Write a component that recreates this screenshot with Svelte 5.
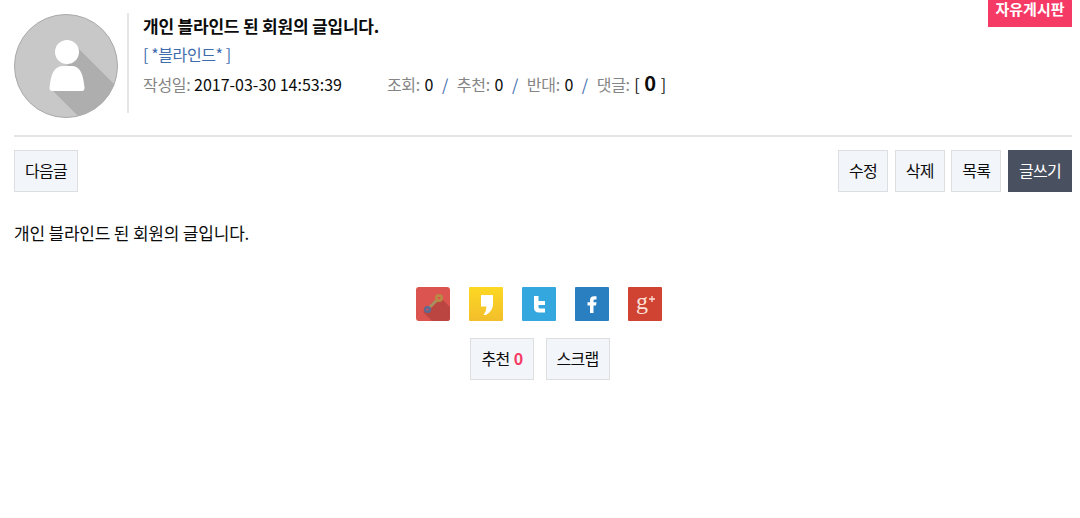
<script lang="ts">
  const shares = ['key', 'kakao', 'twitter', 'facebook', 'google'];
</script>

<div class="page">
  <span class="board">자유게시판</span>

  <header class="head">
    <svg class="avatar" viewBox="0 0 104 104" aria-hidden="true">
      <defs>
        <clipPath id="round"><circle cx="52" cy="52" r="51.5" /></clipPath>
      </defs>
      <circle cx="52" cy="52" r="51.5" fill="#c8c8c8" stroke="#a9a9a9" />
      <path clip-path="url(#round)" d="M64 34 L110 80 L110 110 L72 110 L38 76 Z" fill="#aeaeae" />
      <circle cx="53" cy="38" r="12" fill="#fff" />
      <path d="M36 76 Q35 74 36 70 Q38 52 49 52 L58 52 Q68 52 70 70 Q71 74 70 76 Q70 77 67 77 L39 77 Q36 77 36 76 Z" fill="#fff" />
    </svg>
    <div class="info">
      <h1>개인 블라인드 된 회원의 글입니다.</h1>
      <div class="author">[ *블라인드* ]</div>
      <div class="meta">
        <span class="date"><em>작성일:</em> 2017-03-30 14:53:39</span>
        <span><em>조회:</em> 0 <i>/</i> <em>추천:</em> 0 <i>/</i> <em>반대:</em> 0 <i>/</i> <em>댓글:</em> [ <b>0</b> ]</span>
      </div>
    </div>
  </header>

  <nav class="toolbar">
    <a class="btn">다음글</a>
    <div class="right">
      <a class="btn">수정</a>
      <a class="btn">삭제</a>
      <a class="btn">목록</a>
      <a class="btn dark">글쓰기</a>
    </div>
  </nav>

  <p class="body">개인 블라인드 된 회원의 글입니다.</p>

  <div class="shares">
    {#each shares as s}
      <svg class="share" viewBox="0 0 34 34" aria-hidden="true">
        {#if s === 'key'}
          <rect width="34" height="34" rx="3" fill="#dc5450" />
          <path d="M7 25 L23 9 L34 20 L34 31 Q34 34 31 34 L16 34 Z" fill="#bb4540" />
          <path d="M13 21 L21 13" stroke="#a89060" stroke-width="3" />
          <circle cx="23" cy="11" r="4" fill="#b98a45" />
          <circle cx="23" cy="11" r="1.3" fill="#dc5450" />
          <circle cx="11.5" cy="22.5" r="3.6" fill="#5d6a94" />
          <circle cx="11.5" cy="22.5" r="1.1" fill="#dc5450" />
        {:else if s === 'kakao'}
          <defs>
            <linearGradient id="yel" x1="0" y1="0" x2="0" y2="1">
              <stop offset="0" stop-color="#fcd823" />
              <stop offset="1" stop-color="#f2be2b" />
            </linearGradient>
          </defs>
          <rect width="34" height="34" rx="1" fill="url(#yel)" />
          <path d="M12 8 H24 V17 Q24 24 17 28 L14.5 28 Q17.5 24 17.5 19.5 L12 19.5 Z" fill="#fff" />
        {:else if s === 'twitter'}
          <rect width="34" height="34" rx="1" fill="#34a8de" />
          <path d="M12 9 H16.5 V14 H23 V18 H16.5 V20 Q16.5 21.5 18 21.5 H23 V25.5 H17 Q12 25.5 12 20.5 Z" fill="#fff" />
        {:else if s === 'facebook'}
          <rect width="34" height="34" rx="1" fill="#2a7fc1" />
          <path d="M15 26 V18.5 H12.5 V15.3 H15 V13 Q15 9.2 19 9.2 H21.5 V12.4 H20 Q18.5 12.4 18.5 13.7 V15.3 H21.5 L21 18.5 H18.5 V26 Z" fill="#fff" />
        {:else}
          <rect width="34" height="34" rx="1" fill="#d04332" />
          <text x="8" y="22" class="gplus">g</text>
          <path d="M21 12 H27 M24 9 V15" stroke="#fbe0d8" stroke-width="1.3" />
        {/if}
      </svg>
    {/each}
  </div>

  <div class="actions">
    <a class="btn">추천&nbsp;<strong>0</strong></a>
    <a class="btn">스크랩</a>
  </div>
</div>

<style>
  :global(body) {
    margin: 0;
    background: #fff;
  }
  .page {
    position: relative;
    height: 518px;
    box-sizing: border-box;
    padding: 13px 8px 0 14px;
    font-family: "Noto Sans CJK KR", "Noto Sans", sans-serif;
    font-size: 16px;
    color: #0c0c0c;
    overflow: hidden;
  }
  .board {
    position: absolute;
    top: 0;
    right: 8px;
    width: 84px;
    height: 27px;
    background: #f53a66;
    color: #fff;
    font-size: 15px;
    font-weight: 700;
    line-height: 16px;
    padding-top: 1px;
    box-sizing: border-box;
    text-align: center;
  }
  .head {
    display: flex;
    gap: 9px;
    padding-bottom: 17px;
    border-bottom: 2px solid #e4e4e4;
  }
  .avatar {
    width: 104px;
    height: 104px;
    margin-top: 1px;
    flex: none;
  }
  .info {
    height: 100px;
    box-sizing: border-box;
    border-left: 2px solid #e6e6e6;
    padding-left: 14px;
  }
  h1 {
    margin: 0;
    height: 26px;
    font-size: 17px;
    line-height: 26px;
    font-weight: 700;
    letter-spacing: -0.2px;
  }
  .author {
    margin-top: 2px;
    height: 28px;
    line-height: 26px;
    color: #3f6cad;
    letter-spacing: -0.4px;
  }
  .meta {
    display: flex;
    gap: 45px;
    line-height: 30px;
  }
  .meta em {
    font-style: normal;
    color: #858585;
    letter-spacing: -0.3px;
  }
  .meta i {
    font-style: normal;
    color: #3f6cad;
    margin: 0 5px;
  }
  .meta span:last-child em {
    margin-right: 1px;
  }
  .meta b {
    font-size: 20px;
    font-weight: 700;
    line-height: 20px;
    margin: 0 1px;
  }
  .toolbar {
    display: flex;
    justify-content: space-between;
    margin-top: 13px;
  }
  .right {
    display: flex;
    gap: 6.6px;
  }
  .btn {
    display: flex;
    align-items: center;
    justify-content: center;
    box-sizing: border-box;
    height: 42px;
    padding: 0 10px 2px;
    background: #f2f5f9;
    border: 1px solid #dcdee0;
    font-size: 16px;
    letter-spacing: -0.7px;
    color: #0c0c0c;
  }
  .btn.dark {
    background: #495060;
    border-color: #495060;
    color: #fff;
  }
  .btn strong {
    margin-left: 1.5px;
    color: #f53a66;
    font-weight: 700;
  }
  .body {
    margin: 29px 0 0;
    font-size: 17px;
    line-height: 24px;
    letter-spacing: -0.2px;
  }
  .shares {
    display: flex;
    justify-content: center;
    gap: 19px;
    margin-top: 42px;
    padding-right: 8px;
  }
  .share {
    width: 34px;
    height: 34px;
  }
  .gplus {
    font-family: "Liberation Serif", serif;
    font-size: 24px;
    fill: #fbe0d8;
  }
  .actions {
    display: flex;
    justify-content: center;
    gap: 12px;
    margin-top: 17px;
    padding-right: 6px;
  }
</style>
